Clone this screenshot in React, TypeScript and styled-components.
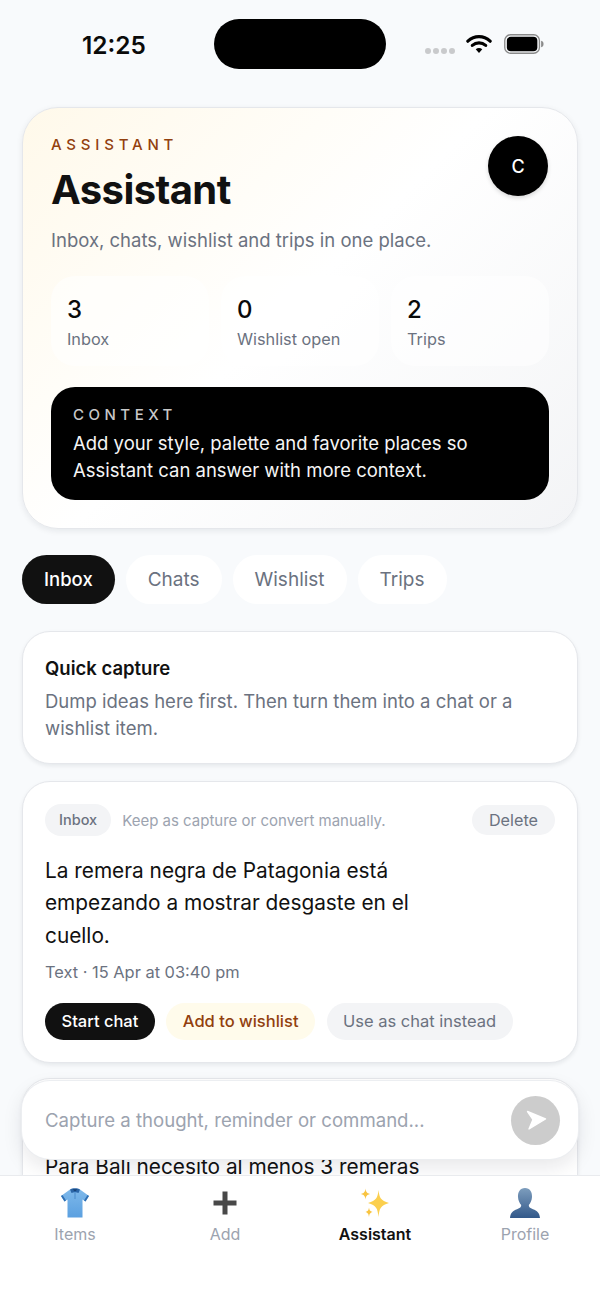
import React from 'react';
import styled, { createGlobalStyle } from 'styled-components';

const GlobalStyle = createGlobalStyle`
  html, body {
    margin:0;
    padding:0;
    background:#f8fafc;
  }
  body {
    font-family:Inter, "Liberation Sans", sans-serif;
    color:#111111;
  }
`

const Screen = styled.div`
  position:relative;
  width:600px;
  height:1298px;
  overflow:hidden;
  background:#f8fafc;
`

const StatusBar = styled.div`
  display:grid;
  grid-template-columns:214px 172px 1fr;
  height:107px;
  padding-top:19px;
  box-sizing:border-box;
  .time {
    padding:11px 0 0 82px;
    font-size:24.4px;
    line-height:30px;
    font-weight:600;
    color:#0a0a0a;
  }
  .island {
    height:50px;
    border-radius:25px;
    background:#000;
  }
  .signals {
    display:flex;
    align-items:flex-start;
    padding:15px 0 0 39px;
  }
  .dots {
    display:flex;
    gap:2px;
    margin:14px 11px 0 0;
    span {
      width:6px;
      height:6px;
      border-radius:50%;
      background:#c9cacc;
    }
  }
  .battery {
    margin-left:11px;
  }
`

const Content = styled.div`
  display:flex;
  flex-direction:column;
  padding:0 22px;
`

const Hero = styled.section`
  padding:28px 28px 28px;
  border:1px solid #e5e7eb;
  border-radius:36px;
  background:linear-gradient(135deg, #fff9ea 0%, #ffffff 48%, #f3f4f6 100%);
  box-shadow:0 2px 6px rgba(15, 23, 42, 0.08);
`

const HeroTop = styled.div`
  display:flex;
  justify-content:space-between;
  align-items:flex-start;
`

const Eyebrow = styled.div`
  font-size:15px;
  line-height:18px;
  font-weight:500;
  letter-spacing:4.8px;
  color:#92400e;
`

const Title = styled.h1`
  margin:11px 0 0;
  font-size:40px;
  line-height:50px;
  font-weight:700;
  letter-spacing:-0.6px;
  color:#111111;
`

const Subtitle = styled.p`
  margin:12px 0 0;
  font-size:18.5px;
  line-height:26px;
  color:#6b7280;
`

const Avatar = styled.div`
  display:flex;
  align-items:center;
  justify-content:center;
  width:60px;
  height:60px;
  margin:0 1px 0 0;
  border-radius:50%;
  background:#000;
  color:#fff;
  font-size:18px;
  font-weight:500;
  box-shadow:0 2px 4px rgba(0, 0, 0, 0.15);
`

const Stats = styled.div`
  display:grid;
  grid-template-columns:repeat(3, 1fr);
  gap:12px;
  margin-top:23px;
`

const Stat = styled.div`
  height:90px;
  padding:18px 16px 0;
  box-sizing:border-box;
  border-radius:24px;
  background:rgba(255, 255, 255, 0.55);
  strong {
    display:block;
    font-size:24px;
    line-height:32px;
    font-weight:500;
    color:#0a0a0a;
  }
  span {
    display:block;
    margin-top:2px;
    font-size:16.3px;
    line-height:22px;
    color:#6b7280;
    white-space:nowrap;
  }
`

const ContextBox = styled.div`
  margin-top:21px;
  padding:18px 22px 16px;
  border-radius:24px;
  background:#000;
  color:#fff;
  .label {
    font-size:15px;
    line-height:20px;
    font-weight:500;
    letter-spacing:4.5px;
    color:#c8c8c8;
  }
  .text {
    margin-top:5px;
    font-size:18.5px;
    line-height:27px;
    color:#f5f5f5;
  }
`

const Tabs = styled.div`
  display:flex;
  gap:11px;
  margin-top:26px;
`

const Tab = styled.div<{ $active?: boolean }>`
  height:49px;
  padding:0 22px;
  border-radius:25px;
  font-size:${({ $active }) => ($active ? '18.5px' : '19px')};
  line-height:49px;
  font-weight:${({ $active }) => ($active ? 500 : 400)};
  color:${({ $active }) => ($active ? '#ffffff' : '#6b7280')};
  background:${({ $active }) => ($active ? '#111111' : '#ffffff')};
`

const Card = styled.section`
  padding:22px;
  border:1px solid #e5e7eb;
  border-radius:28px;
  background:#fff;
  box-shadow:0 2px 4px rgba(15, 23, 42, 0.08);
`

const QuickCard = styled(Card)`
  margin-top:27px;
  padding:24px 22px 21px;
  h2 {
    margin:0;
    font-size:18.5px;
    line-height:24px;
    font-weight:600;
    color:#111111;
  }
  p {
    margin:8px 0 0;
    font-size:18.5px;
    line-height:27px;
    color:#6b7280;
  }
`

const ItemCard = styled(Card)`
  flex:none;
  margin-top:17px;
  padding:22px 22px 22px;
  & + & {
    margin-top:15px;
  }
`

const ItemHead = styled.div`
  display:flex;
  align-items:center;
  height:32px;
  .hint {
    flex:1;
    margin-left:11px;
    font-size:15px;
    color:#9ca3af;
    white-space:nowrap;
  }
`

const Chip = styled.span`
  height:32px;
  padding:0 14px;
  border-radius:16px;
  background:#f3f4f6;
  color:#6b7280;
  font-size:14.5px;
  line-height:32px;
  font-weight:500;
`

const DeleteButton = styled.span`
  height:30px;
  padding:0 17px;
  border-radius:15px;
  background:#f3f4f6;
  color:#6b7280;
  font-size:16.2px;
  line-height:30px;
`

const ItemText = styled.p`
  width:390px;
  margin:18.5px 0 0;
  font-size:20.8px;
  line-height:32.5px;
  color:#111111;
`

const ItemMeta = styled.div`
  margin-top:7.5px;
  font-size:16.4px;
  line-height:24px;
  color:#6b7280;
`

const ActionRow = styled.div`
  display:flex;
  gap:11.5px;
  margin-top:19px;
`

const Action = styled.span<{ $tone: 'dark' | 'warm' | 'muted' }>`
  height:37px;
  padding:0 16.5px;
  border-radius:19px;
  font-size:16.5px;
  line-height:37px;
  white-space:nowrap;
  font-weight:${({ $tone }) => ($tone === 'muted' ? 400 : 500)};
  color:${({ $tone }) => ($tone === 'dark' ? '#ffffff' : $tone === 'warm' ? '#92400e' : '#6b7280')};
  background:${({ $tone }) => ($tone === 'dark' ? '#111111' : $tone === 'warm' ? '#fffbeb' : '#f3f4f6')};
`

const Composer = styled.div`
  position:absolute;
  left:22px;
  right:22px;
  bottom:139px;
  display:flex;
  align-items:center;
  justify-content:space-between;
  height:78px;
  padding:0 18px 0 23px;
  box-sizing:border-box;
  border-radius:28px;
  background:#fff;
  box-shadow:0 0 0 1px #eceef1, 0 8px 20px rgba(15, 23, 42, 0.1);
  color:#9ca3af;
  font-size:18.6px;
  .send {
    display:flex;
    align-items:center;
    justify-content:center;
    width:49px;
    height:49px;
    border-radius:50%;
    background:#cccccc;
  }
`

const TabBar = styled.nav`
  position:absolute;
  left:0;
  right:0;
  bottom:0;
  display:grid;
  grid-template-columns:repeat(4, 1fr);
  height:123px;
  box-sizing:border-box;
  border-top:1px solid #e9ebee;
  background:#fff;
`

const NavItem = styled.div<{ $active?: boolean }>`
  display:flex;
  flex-direction:column;
  align-items:center;
  padding-top:11px;
  svg {
    display:block;
    width:32px;
    height:32px;
  }
  span {
    margin-top:5px;
    font-size:16px;
    line-height:21px;
    font-weight:${({ $active }) => ($active ? 600 : 400)};
    color:${({ $active }) => ($active ? '#111111' : '#9ca3af')};
  }
`

const Wifi = () => (
  <svg width="26" height="20" viewBox="0 0 28 21">
    <path d="M2 7.5C9 1 19 1 26 7.5" fill="none" stroke="#000" strokeWidth="3.4" strokeLinecap="round" />
    <path d="M6.8 12C11 8.4 17 8.4 21.2 12" fill="none" stroke="#000" strokeWidth="3.4" strokeLinecap="round" />
    <path d="M10.5 16.2L14 20.2L17.5 16.2C15.5 14.4 12.5 14.4 10.5 16.2Z" fill="#000" />
  </svg>
)

const Battery = () => (
  <svg className="battery" width="42" height="20" viewBox="0 0 42 21">
    <rect x="0.8" y="0.8" width="36.4" height="19.4" rx="6" fill="none" stroke="#8a8a8a" strokeWidth="1.4" />
    <rect x="3" y="3" width="32" height="15" rx="4.2" fill="#000" />
    <path d="M39 7C41 7.5 41.5 9 41.5 10.5C41.5 12 41 13.5 39 14Z" fill="#8a8a8a" />
  </svg>
)

const SendIcon = () => (
  <svg width="24" height="24" viewBox="0 0 24 24">
    <path d="M3.5 3.5L21.5 11L5 21L9 11.5Z" fill="#fff" stroke="#fff" strokeWidth="1.4" strokeLinejoin="round" />
  </svg>
)

const ShirtIcon = () => (
  <svg viewBox="0 0 32 32">
    <defs>
      <linearGradient id="shirtBody" x1="0" y1="0" x2="0" y2="1">
        <stop offset="0" stopColor="#7db8ea" />
        <stop offset="1" stopColor="#5ba0e0" />
      </linearGradient>
    </defs>
    <path d="M11 2.5L2 9L5.5 14.5L8.5 12.5V30.5H23.5V12.5L26.5 14.5L30 9L21 2.5L16 5Z" fill="url(#shirtBody)" />
    <path d="M2 9L5.5 14.5L7 13.5L3.5 8Z M30 9L26.5 14.5L25 13.5L28.5 8Z" fill="#2f6fb3" />
    <path d="M11 2.5C13 0.8 19 0.8 21 2.5L19.5 6L16 5L12.5 6Z" fill="#2b66a8" />
    <path d="M13.5 2.6C15 2 17 2 18.5 2.6L16 4.2Z" fill="#173f70" />
    <path d="M16 5V12" stroke="#4a8bcb" strokeWidth="1" />
  </svg>
)

const PlusIcon = () => (
  <svg viewBox="0 0 32 32">
    <path d="M13.5 4.5H18.5V13.5H27.5V18.5H18.5V27.5H13.5V18.5H4.5V13.5H13.5Z" fill="#484848" />
  </svg>
)

const SparkleIcon = () => (
  <svg viewBox="0 0 32 32">
    <path d="M19.5 3C20.4 11 21.6 13.2 30 16C21.6 18.8 20.4 21 19.5 30C18.6 21 17.4 18.8 9 16C17.4 13.2 18.6 11 19.5 3Z" fill="#fbcf4e" />
    <path d="M6.5 1.5C7 5 7.6 5.8 11 7C7.6 8.2 7 9 6.5 12.5C6 9 5.4 8.2 2 7C5.4 5.8 6 5 6.5 1.5Z" fill="#f9c440" />
    <path d="M10 20.5C10.4 23.3 11 24 13.5 25C11 26 10.4 26.7 10 30C9.6 26.7 9 26 6.5 25C9 24 9.6 23.3 10 20.5Z" fill="#f9c440" />
  </svg>
)

const PersonIcon = () => (
  <svg viewBox="0 0 32 32">
    <defs>
      <linearGradient id="personBody" x1="0" y1="0" x2="0" y2="1">
        <stop offset="0" stopColor="#7d9dbd" />
        <stop offset="1" stopColor="#33598a" />
      </linearGradient>
    </defs>
    <path d="M16 1C21 1 23.3 5 23 10C22.8 13.5 21.5 16 19.8 18C19.6 20 21 21 24 22.2C28 23.8 30.5 25.5 31 31H1C1.5 25.5 4 23.8 8 22.2C11 21 12.4 20 12.2 18C10.5 16 9.2 13.5 9 10C8.7 5 11 1 16 1Z" fill="url(#personBody)" />
  </svg>
)

const App = () => {
  return (
    <Screen>
      <GlobalStyle />
      <StatusBar>
        <div className="time">12:25</div>
        <div className="island" />
        <div className="signals">
          <div className="dots"><span /><span /><span /><span /></div>
          <Wifi />
          <Battery />
        </div>
      </StatusBar>

      <Content>
        <Hero>
          <HeroTop>
            <div>
              <Eyebrow>ASSISTANT</Eyebrow>
              <Title>Assistant</Title>
            </div>
            <Avatar>C</Avatar>
          </HeroTop>
          <Subtitle>Inbox, chats, wishlist and trips in one place.</Subtitle>
          <Stats>
            <Stat><strong>3</strong><span>Inbox</span></Stat>
            <Stat><strong>0</strong><span>Wishlist open</span></Stat>
            <Stat><strong>2</strong><span>Trips</span></Stat>
          </Stats>
          <ContextBox>
            <div className="label">CONTEXT</div>
            <div className="text">Add your style, palette and favorite places so Assistant can answer with more context.</div>
          </ContextBox>
        </Hero>

        <Tabs>
          <Tab $active>Inbox</Tab>
          <Tab>Chats</Tab>
          <Tab>Wishlist</Tab>
          <Tab>Trips</Tab>
        </Tabs>

        <QuickCard>
          <h2>Quick capture</h2>
          <p>Dump ideas here first. Then turn them into a chat or a wishlist item.</p>
        </QuickCard>

        <ItemCard>
          <ItemHead>
            <Chip>Inbox</Chip>
            <span className="hint">Keep as capture or convert manually.</span>
            <DeleteButton>Delete</DeleteButton>
          </ItemHead>
          <ItemText>La remera negra de Patagonia está empezando a mostrar desgaste en el cuello.</ItemText>
          <ItemMeta>Text · 15 Apr at 03:40 pm</ItemMeta>
          <ActionRow>
            <Action $tone="dark">Start chat</Action>
            <Action $tone="warm">Add to wishlist</Action>
            <Action $tone="muted">Use as chat instead</Action>
          </ActionRow>
        </ItemCard>

        <ItemCard>
          <ItemHead />
          <ItemText>Para Bali necesito al menos 3 remeras</ItemText>
        </ItemCard>
      </Content>

      <Composer>
        <span>Capture a thought, reminder or command...</span>
        <div className="send"><SendIcon /></div>
      </Composer>

      <TabBar>
        <NavItem><ShirtIcon /><span>Items</span></NavItem>
        <NavItem><PlusIcon /><span>Add</span></NavItem>
        <NavItem $active><SparkleIcon /><span>Assistant</span></NavItem>
        <NavItem><PersonIcon /><span>Profile</span></NavItem>
      </TabBar>
    </Screen>
  );
};

export default App;
